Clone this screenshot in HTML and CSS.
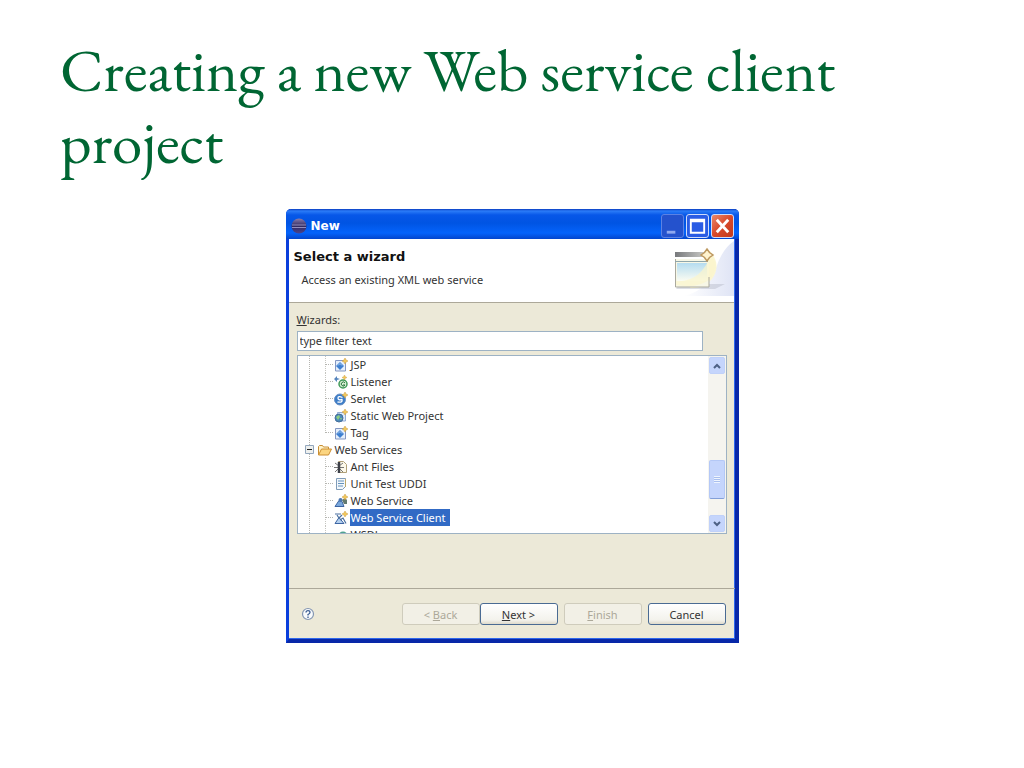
FILE: index.html
```html
<!DOCTYPE html>
<html lang="en">

<head>
    <meta charset="UTF-8">
    <meta name="viewport" content="width=device-width, initial-scale=1.0">
    <title>Creating a new Web service client project</title>
    <link rel="stylesheet" href="styles.css">
</head>

<body>
    <!-- shared icon shapes -->
    <svg class="defs" aria-hidden="true">
        <defs>
            <linearGradient id="sky" x1="0" y1="0" x2="0" y2="1">
                <stop offset="0" stop-color="#b5dcf0" />
                <stop offset="1" stop-color="#fbfcf2" />
            </linearGradient>
            <linearGradient id="bar">
                <stop offset="0" stop-color="#77797c" />
                <stop offset="1" stop-color="#c9c9c6" />
            </linearGradient>
            <linearGradient id="swoosh">
                <stop offset="0" stop-color="#fff" />
                <stop offset="1" stop-color="#dfe4f5" />
            </linearGradient>
            <linearGradient id="ball" x1="0" y1="0" x2="0" y2="1">
                <stop offset="0" stop-color="#8b7fae" />
                <stop offset=".5" stop-color="#2f2860" />
                <stop offset="1" stop-color="#4a4590" />
            </linearGradient>
            <symbol id="spark" viewBox="0 0 6 6">
                <path d="M3 0l1 2 2 1-2 1-1 2-1-2-2-1 2-1z" fill="#f3c85a" stroke="#c99a3c" stroke-width=".5" />
            </symbol>
            <symbol id="page" viewBox="0 0 14 14">
                <path d="M1.500 2.500h10v10.500h-10z" fill="#e4eefb" stroke="#8497c2" />
                <path d="M6 4l4 4-4 4-4-4z" fill="#3e7fd0" />
                <path d="M4 7.500l2-2 2 2" fill="none" stroke="#a8cdf4" />
                <use href="#spark" x="8" y="0" width="6" height="6" />
            </symbol>
        </defs>
    </svg>

    <main class="slide">
        <h1>Creating a new Web service client project</h1>

        <section class="dialog" aria-label="New">
            <div class="titlebar">
                <svg class="logo" viewBox="0 0 16 16" aria-hidden="true">
                    <circle cx="8" cy="8" r="7.500" fill="url(#ball)" />
                    <path d="M1 7h14M1 9.500h14" stroke="#aaa4d0" stroke-width=".8" />
                </svg>
                <span class="caption">New</span>
                <button class="win" aria-label="Minimize" disabled>
                    <svg viewBox="0 0 22 22"><path d="M5 16h9v3H5z" fill="#8fa9ef" /></svg>
                </button>
                <button class="win max" aria-label="Maximize">
                    <svg viewBox="0 0 22 22"><path d="M3 4.500h16M4 4v14h14V4M4 6h14" fill="none" stroke="#fff" stroke-width="2" /></svg>
                </button>
                <button class="win close" aria-label="Close">
                    <svg viewBox="0 0 22 22"><path d="M5 4.500l12 13M17 4.500l-12 13" stroke="#fff" stroke-width="3" /></svg>
                </button>
            </div>

            <div class="banner">
                <div class="message">
                    <h2>Select a wizard</h2>
                    <p>Access an existing XML web service</p>
                </div>
                <svg class="art" viewBox="0 0 64 57" aria-hidden="true">
                    <path d="M64 2v55H14q24-6 32-28Q52 10 64 2z" fill="url(#swoosh)" />
                    <path d="M10 45h45l-10 5H6z" fill="#b9bdcc" opacity=".5" />
                    <path d="M40 12Q52 26 42 40Q34 50 20 49L36 16z" fill="#fbf6d2" />
                    <path d="M5 20h34v28H5z" fill="#f7f7e6" />
                    <path d="M7 24h30v18H7z" fill="url(#sky)" />
                    <path d="M6 42Q30 44 41 16Q50 28 40 40Q28 50 6 46z" fill="#fbf5cc" opacity=".7" />
                    <path d="M5.500 20v28H39V38" fill="none" stroke="#aaa99e" />
                    <path d="M5 22.500h33" stroke="#8fa6ac" />
                    <path d="M5 13h30v5H5z" fill="url(#bar)" />
                    <path d="M37 10l2.500 3.500 3.500 2.500-3.500 2.500L37 22l-2.500-3.500L31 16l3.500-2.500z" fill="#fff3cf" stroke="#bd9860" stroke-width="1.500" />
                </svg>
            </div>

            <div class="content">
                <label for="filter"><u>W</u>izards:</label>
                <input class="filter" id="filter" type="text" value="type filter text">

                <div class="treebox">
                    <ul class="tree">
                        <li>
                            <ul class="branch">
                                <li><svg viewBox="0 0 14 14"><use href="#page" /></svg><span>JSP</span></li>
                                <li>
                                    <svg viewBox="0 0 14 14">
                                        <path d="M0 4l3-3v2l3 1-3 1v2z" fill="#5685bd" />
                                        <circle cx="9" cy="9" r="4" fill="#d9f0d4" stroke="#419a59" stroke-width="1.500" />
                                        <path d="M11 8a2 2 0 1 0 0 2H9" fill="none" stroke="#27753e" />
                                        <use href="#spark" x="8" y="0" width="5" height="5" />
                                    </svg>
                                    <span>Listener</span>
                                </li>
                                <li>
                                    <svg viewBox="0 0 14 14">
                                        <circle cx="6" cy="7.500" r="5.500" fill="#3c7dc8" stroke="#6a91c5" />
                                        <path d="M8.500 5.500Q4 3.500 4 6t4 1.500Q9 11 3.500 10" fill="none" stroke="#fff" stroke-width="1.300" />
                                        <use href="#spark" x="8" y="0" width="6" height="6" />
                                    </svg>
                                    <span>Servlet</span>
                                </li>
                                <li>
                                    <svg viewBox="0 0 14 14">
                                        <path d="M3.500 3.500h8v8.500h-8z" fill="#dbe8fa" stroke="#93abd4" />
                                        <circle cx="5" cy="9" r="4" fill="#4c8bb9" stroke="#456e9c" />
                                        <path d="M2 8l3-2 1 2-2 3zM6 9l2 0-1 2z" fill="#8fd080" />
                                        <use href="#spark" x="8" y="0" width="6" height="6" />
                                    </svg>
                                    <span>Static Web Project</span>
                                </li>
                                <li><svg viewBox="0 0 14 14"><use href="#page" /></svg><span>Tag</span></li>
                            </ul>
                        </li>
                        <li>
                            <div class="folder">
                                <svg class="toggle" viewBox="0 0 9 9">
                                    <path d="M.5.5h8v8h-8z" fill="#eef0ee" stroke="#93a7bd" />
                                    <path d="M2 4.500h5" stroke="#222" />
                                </svg>
                                <svg viewBox="0 0 14 14">
                                    <path d="M.5 12V3.500l1-1h3l1 1.500h5v2" fill="#fff3c9" stroke="#c98f35" />
                                    <path d="M.5 12l3-6h10l-3 6z" fill="#fbd581" stroke="#cd8e30" />
                                </svg>
                                <span>Web Services</span>
                            </div>
                            <ul class="branch open">
                                <li>
                                    <svg viewBox="0 0 14 14">
                                        <path d="M4.500 1.500h5l3 3v8h-8z" fill="#fdf9ea" stroke="#b0a078" />
                                        <path d="M1 3l4 3M9 3L5 6M0 7.500h10M1 12l4-4 4 4" fill="none" stroke="#555" stroke-width=".8" />
                                        <path d="M5 2v11" stroke="#3d4048" stroke-width="2.500" />
                                    </svg>
                                    <span>Ant Files</span>
                                </li>
                                <li>
                                    <svg viewBox="0 0 14 14">
                                        <path d="M2.500 1.500h9v8l-3 3h-6z" fill="#f2f7fb" stroke="#809cb8" />
                                        <path d="M4 4h6M4 6.500h6M4 9h5" stroke="#6492bc" />
                                        <path d="M11.500 2v8" stroke="#bda869" />
                                    </svg>
                                    <span>Unit Test UDDI</span>
                                </li>
                                <li>
                                    <svg viewBox="0 0 14 14">
                                        <path d="M1 12.500l4-6 3 1 2 5z" fill="#79a7dc" stroke="#3c64a2" />
                                        <circle cx="6.500" cy="6" r="2" fill="#4c77b0" />
                                        <path d="M8 6l3-2 2 2v4h-3z" fill="#637a70" />
                                        <use href="#spark" x="8" y="0" width="6" height="6" />
                                    </svg>
                                    <span>Web Service</span>
                                </li>
                                <li class="selected">
                                    <svg viewBox="0 0 14 14">
                                        <path d="M1 12.500l4-6 5 6z" fill="#b4d0ef" stroke="#3c64a2" />
                                        <path d="M1 3h6M3 4l2 3 3-3M6 9l3-2 3 5.500" fill="none" stroke="#4a6f9f" stroke-width="1.200" />
                                        <use href="#spark" x="8" y="0" width="6" height="6" />
                                    </svg>
                                    <span>Web Service Client</span>
                                </li>
                                <li>
                                    <svg viewBox="0 0 14 14"><circle cx="9" cy="8" r="4.500" fill="#4fa391" /></svg>
                                    <span>WSDL</span>
                                </li>
                            </ul>
                        </li>
                    </ul>
                    <div class="scrollbar">
                        <button aria-label="Scroll up"><svg viewBox="0 0 8 6"><path d="M1 5l3-3 3 3" /></svg></button>
                        <div class="track">
                            <div class="thumb"></div>
                        </div>
                        <button aria-label="Scroll down"><svg viewBox="0 0 8 6"><path d="M1 1l3 3 3-3" /></svg></button>
                    </div>
                </div>
            </div>

            <div class="buttons">
                <button class="help" aria-label="Help">
                    <svg viewBox="0 0 14 14">
                        <circle cx="7" cy="7" r="5.500" fill="#f8fafc" stroke="#8496b2" stroke-width="1.200" />
                        <path d="M5 5.500Q5 3.700 7 3.700t2 1.800Q9 6.500 7 7.500V8.500M7 9.500V11" fill="none" stroke="#3d5f94" stroke-width="1.300" />
                    </svg>
                </button>
                <div class="pair">
                    <button class="btn" disabled>&lt; <u>B</u>ack</button>
                    <button class="btn"><u>N</u>ext &gt;</button>
                </div>
                <button class="btn" disabled><u>F</u>inish</button>
                <button class="btn">Cancel</button>
            </div>
        </section>
    </main>
</body>

</html>
```
FILE: styles.css
```css
* {
    margin: 0;
    box-sizing: border-box;
}

body {
    background: #fff;
    font-family: "Noto Sans", sans-serif;
    font-size: 11px;
    line-height: 17px;
    color: #333;
}

ul {
    padding: 0;
    list-style: none;
}

svg {
    display: block;
    flex: none;
}

button,
input {
    font: inherit;
    color: inherit;
}

.defs {
    position: absolute;
    width: 0;
    height: 0;
}

.slide {
    padding: 34px 60px 40px;
}

h1 {
    margin-bottom: 31px;
    font-family: "EB Garamond", Garamond, "Liberation Serif", serif;
    font-size: 61px;
    font-weight: 400;
    line-height: 72px;
    color: #006633;
}

/* dialog */
.dialog {
    width: 100%;
    max-width: 453px;
    margin: 0 auto;
    background: #ece9d8;
    border: solid #0a3fdc;
    border-width: 0 4px 4px 3px;
    border-right-color: #0828a8;
    border-bottom-color: #0828a8;
    border-radius: 5px 5px 0 0;
    box-shadow: inset 0 -1px #2f68ec, inset -1px 0 #2f68ec;
}

.titlebar {
    display: flex;
    align-items: center;
    gap: 2px;
    height: 30px;
    margin: 0 -4px 0 -3px;
    padding: 3px 5px 0;
    background: linear-gradient(#0a3cc0, #2b7cf8 2px, #0757e8 6px, #0054e3 14px, #0463fb 24px, #0345cc);
    border-radius: 5px 5px 0 0;
}

.logo {
    width: 16px;
    height: 16px;
}

.caption {
    flex: 1;
    padding: 2px 0 0 2px;
    font-family: "DejaVu Sans", sans-serif;
    font-weight: 700;
    font-size: 12px;
    color: #fff;
}

.win {
    width: 23px;
    height: 24px;
    padding: 0;
    background: #2a5ce4;
    border: 1px solid #cfdcfb;
    border-radius: 3px;
}

.win svg {
    width: 21px;
    height: 22px;
}

.win:disabled {
    background: #2452cd;
    border-color: #5b82e4;
}

.close {
    background: linear-gradient(135deg, #ea8a6c, #d8492a 50%, #c23a1d);
}

/* wizard banner */
.banner {
    display: flex;
    justify-content: space-between;
    height: 64px;
    margin-right: 1px;
    padding-left: 5px;
    background: #fff;
    border-bottom: 1px solid #aca899;
}

.message {
    padding-top: 9px;
}

h2 {
    margin-bottom: 6px;
    font-family: "DejaVu Sans", sans-serif;
    font-size: 13px;
    line-height: 17px;
    color: #111;
}

.message p {
    padding-left: 8px;
}

.art {
    width: 64px;
    height: 57px;
}

/* content */
.content {
    height: 286px;
    padding: 8px 8px 0;
    border-bottom: 1px solid #aca899;
}

.content label {
    display: block;
    margin-bottom: 3px;
}

.filter {
    display: block;
    width: calc(100% - 24px);
    height: 20px;
    margin-bottom: 4px;
    padding: 0 2px 2px;
    background: #fff;
    border: 1px solid #9db2c4;
}

.treebox {
    display: flex;
    height: 179px;
    overflow: hidden;
    background: #fff;
    border: 1px solid #9db2c4;
}

/* tree */
.tree {
    flex: 1;
    padding-left: 11px;
    background: repeating-linear-gradient(#b5b5b0 0 1px, #fff 1px 2px) 11px 0 / 1px 100% no-repeat;
}

.tree svg {
    width: 14px;
    height: 14px;
}

.branch {
    margin-left: 16px;
}

.branch li {
    display: flex;
    align-items: center;
    height: 17px;
    background: repeating-linear-gradient(#c5c5c0 0 1px, #fff 1px 2px) 0 0 / 1px 100% no-repeat;
}

.branch:not(.open) li:last-child {
    background-size: 1px 9px;
}

.branch li::before {
    content: "";
    width: 8px;
    margin-right: 1px;
    border-top: 1px dotted #b5b5b0;
}

.branch span,
.folder span {
    margin-left: 2px;
    padding: 0 2px 0 1px;
}

.branch .selected span {
    padding-right: 4px;
    background: #316ac5;
    color: #fff;
}

.folder {
    display: flex;
    align-items: center;
    height: 17px;
    margin-left: -4px;
}

.folder .toggle {
    width: 9px;
    height: 9px;
    margin-right: 4px;
}

/* scrollbar */
.scrollbar {
    display: flex;
    flex-direction: column;
    width: 18px;
    padding: 1px;
    background: #f5f4ef;
}

.scrollbar button {
    display: grid;
    place-items: center;
    height: 17px;
    padding: 0;
    background: #c5d5fc;
    border: 1px solid #c0d1f9;
    border-radius: 2px;
}

.scrollbar svg {
    width: 8px;
    height: 6px;
    fill: none;
    stroke: #4d6185;
    stroke-width: 2;
}

.track {
    flex: 1;
    padding-top: 86px;
}

.thumb {
    display: grid;
    place-items: center;
    height: 39px;
    background: #c5d5fc;
    border: 1px solid #b4c8f6;
    border-bottom-color: #839fd8;
    border-radius: 2px;
}

.thumb::before {
    content: "";
    width: 6px;
    height: 7px;
    background: repeating-linear-gradient(#eef4fe 0 1px, #a9bfee 1px 2px);
}

/* bottom buttons */
.buttons {
    display: flex;
    align-items: center;
    gap: 6px;
    height: 50px;
    padding: 0 9px 0 12px;
}

.help {
    margin-right: auto;
    padding: 0;
    background: none;
    border: 0;
}

.help svg {
    width: 14px;
    height: 14px;
}

.pair {
    display: flex;
}

.btn {
    width: 78px;
    height: 22px;
    padding: 0;
    background: linear-gradient(#fff, #f3f2ec 80%, #dedacb);
    border: 1px solid #4a6b93;
    border-radius: 3px;
}

.btn:disabled {
    background: #f2f0e6;
    border-color: #cfccbc;
    color: #aca899;
}
```
